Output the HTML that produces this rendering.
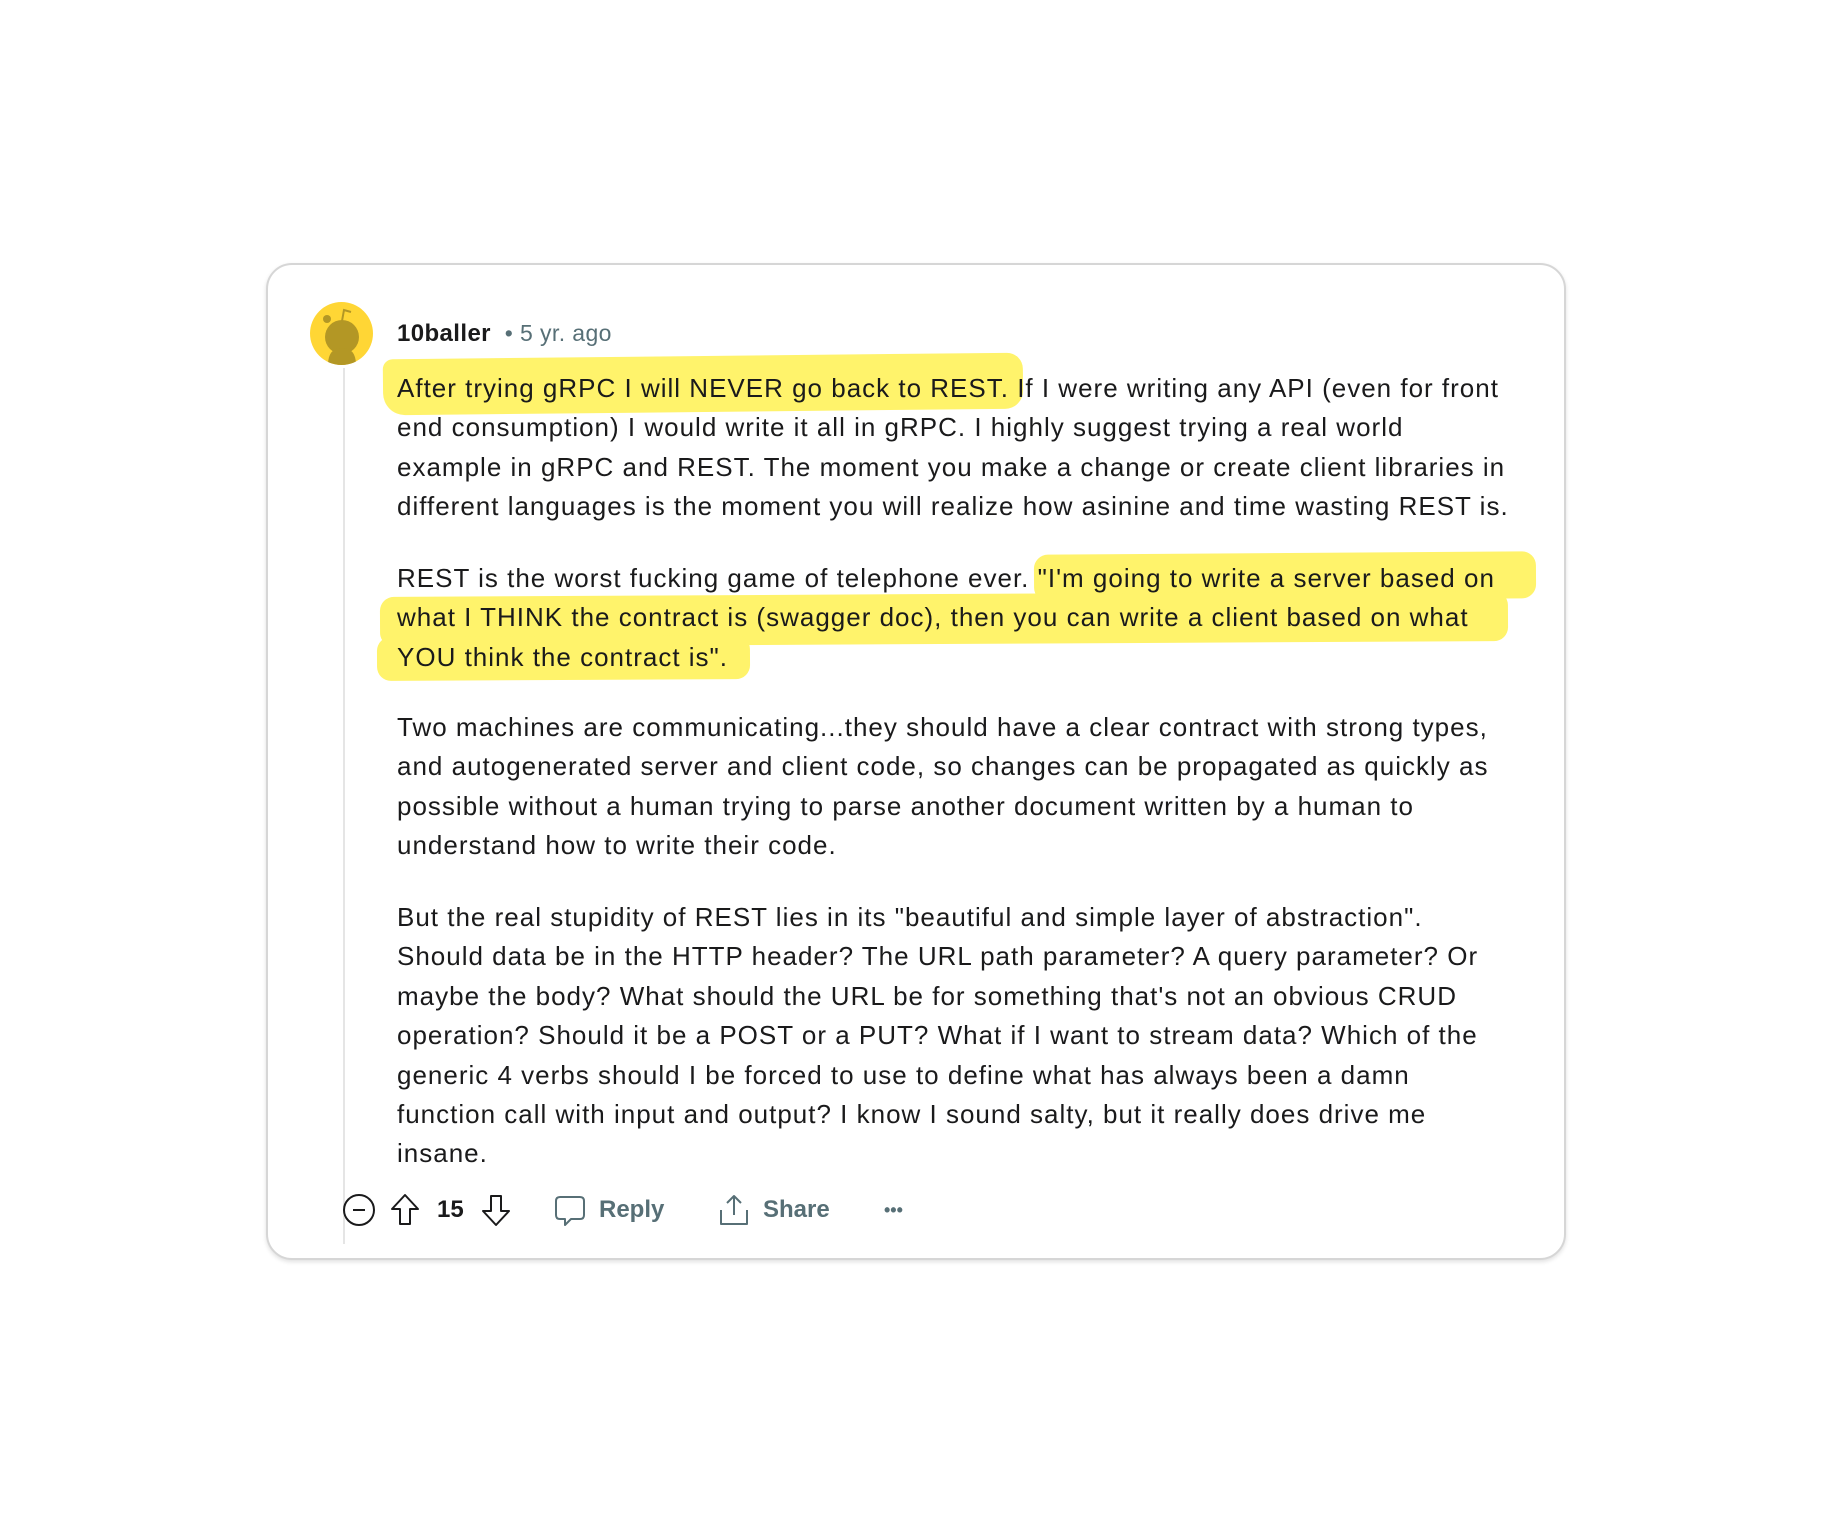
<!DOCTYPE html>
<html><head><meta charset="utf-8"><style>
html,body{margin:0;padding:0;background:#fff;width:1833px;height:1529px;overflow:hidden;font-family:"Liberation Sans",sans-serif;}
.card{position:absolute;left:266px;top:263px;width:1300px;height:997px;border:2px solid #d6d6d6;border-radius:26px;box-shadow:0 2px 4px rgba(0,0,0,0.12);box-sizing:border-box;background:#fff;}
.hl{position:absolute;background:#fff36b;border-radius:14px;}
.p{position:absolute;left:397px;font-size:26px;letter-spacing:1.0px;line-height:39.4px;color:#1a1a1b;white-space:nowrap;}
.act{position:absolute;top:1195px;font-size:24px;font-weight:bold;color:#576f76;line-height:30px;}
</style></head><body>
<div class="card"></div>
<div class="hl" style="left:383px;top:356px;width:640px;height:56px;transform:rotate(-0.6deg);border-radius:10px 16px 18px 22px"></div>
<div class="hl" style="left:1034px;top:553px;width:502px;height:47px;transform:rotate(-0.4deg)"></div>
<div class="hl" style="left:380px;top:594px;width:1128px;height:50px;transform:rotate(-0.3deg)"></div>
<div class="hl" style="left:377px;top:636px;width:373px;height:44px;transform:rotate(-0.3deg)"></div>
<svg style="position:absolute;left:310px;top:302px" width="63" height="63" viewBox="0 0 63 63">
<circle cx="31.5" cy="31.5" r="31.5" fill="#ffd635"/>
<clipPath id="c"><circle cx="31.5" cy="31.5" r="31.5"/></clipPath>
<g clip-path="url(#c)" fill="#b39725">
<circle cx="32" cy="35" r="17"/>
<path d="M18 63 Q18 46 32 46 Q46 46 46 63Z"/>
<circle cx="17" cy="17" r="4"/>
<path d="M32 19 L34 8 L41 10" stroke="#b39725" stroke-width="2" fill="none"/>
</g></svg>
<div style="position:absolute;left:343px;top:368px;width:2px;height:876px;background:#e5e5e5"></div>
<div style="position:absolute;left:397px;top:318px;font-size:24px;letter-spacing:0.4px;line-height:30px;color:#1a1a1b;font-weight:bold">10baller <span style="font-weight:normal;color:#576f76;font-size:23px">&nbsp;•&nbsp;5 yr. ago</span></div>
<div class="p" style="top:369px">After trying gRPC I will NEVER go back to REST. If I were writing any API (even for front<br>end consumption) I would write it all in gRPC. I highly suggest trying a real world<br>example in gRPC and REST. The moment you make a change or create client libraries in<br>different languages is the moment you will realize how asinine and time wasting REST is.</div>
<div class="p" style="top:559px">REST is the worst fucking game of telephone ever. "I'm going to write a server based on<br>what I THINK the contract is (swagger doc), then you can write a client based on what<br>YOU think the contract is".</div>
<div class="p" style="top:708px">Two machines are communicating...they should have a clear contract with strong types,<br>and autogenerated server and client code, so changes can be propagated as quickly as<br>possible without a human trying to parse another document written by a human to<br>understand how to write their code.</div>
<div class="p" style="top:898px">But the real stupidity of REST lies in its "beautiful and simple layer of abstraction".<br>Should data be in the HTTP header? The URL path parameter? A query parameter? Or<br>maybe the body? What should the URL be for something that's not an obvious CRUD<br>operation? Should it be a POST or a PUT? What if I want to stream data? Which of the<br>generic 4 verbs should I be forced to use to define what has always been a damn<br>function call with input and output? I know I sound salty, but it really does drive me<br>insane.</div>
<svg style="position:absolute;left:342px;top:1193px" width="34" height="34" viewBox="0 0 34 34"><circle cx="17" cy="17" r="15" fill="none" stroke="#1a1a1b" stroke-width="2"/><line x1="11" y1="17" x2="23" y2="17" stroke="#1a1a1b" stroke-width="2"/></svg>
<svg style="position:absolute;left:389px;top:1193px" width="32" height="34" viewBox="0 0 32 34"><path d="M16 2 L29 16 L21 16 L21 31 L11 31 L11 16 L3 16 Z" fill="none" stroke="#1a1a1b" stroke-width="2" stroke-linejoin="round"/></svg>
<div class="act" style="left:437px;color:#1a1a1b">15</div>
<svg style="position:absolute;left:480px;top:1193px" width="32" height="34" viewBox="0 0 32 34"><path d="M16 32 L29 18 L21 18 L21 3 L11 3 L11 18 L3 18 Z" fill="none" stroke="#1a1a1b" stroke-width="2" stroke-linejoin="round"/></svg>
<svg style="position:absolute;left:554px;top:1194px" width="32" height="34" viewBox="0 0 32 34"><path d="M6 3 H26 Q30 3 30 7 V21 Q30 25 26 25 H17 L11 31 V25 H6 Q2 25 2 21 V7 Q2 3 6 3Z" fill="none" stroke="#576f76" stroke-width="2" stroke-linejoin="round"/></svg>
<div class="act" style="left:599px">Reply</div>
<svg style="position:absolute;left:718px;top:1193px" width="32" height="34" viewBox="0 0 32 34"><path d="M16 22 V3 M9 10 L16 3 L23 10 M3 17 V31 H29 V17" fill="none" stroke="#576f76" stroke-width="2" stroke-linejoin="round"/></svg>
<div class="act" style="left:763px">Share</div>
<div class="act" style="left:884px;top:1195px;font-size:18px">•••</div>
</body></html>
